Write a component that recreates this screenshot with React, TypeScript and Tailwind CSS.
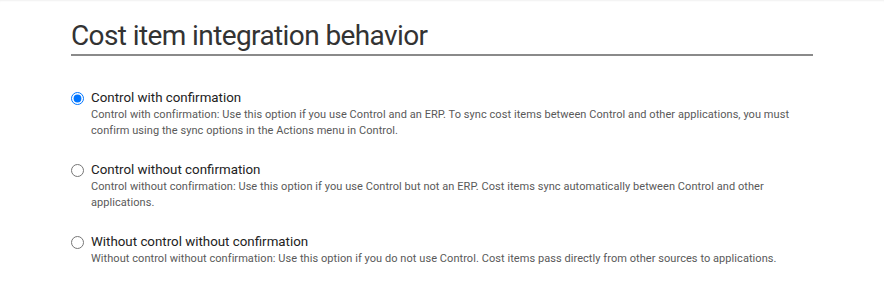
import { useState } from 'react';

const options = [
  {
    id: 'with',
    label: 'Control with confirmation',
    description:
      'Control with confirmation: Use this option if you use Control and an ERP. To sync cost items between Control and other applications, you must confirm using the sync options in the Actions menu in Control.',
  },
  {
    id: 'without',
    label: 'Control without confirmation',
    description:
      'Control without confirmation: Use this option if you use Control but not an ERP. Cost items sync automatically between Control and other applications.',
  },
  {
    id: 'none',
    label: 'Without control without confirmation',
    description:
      'Without control without confirmation: Use this option if you do not use Control. Cost items pass directly from other sources to applications.',
  },
];

export default function App() {
  const [selected, setSelected] = useState('with');

  return (
    <div className="w-[884px] h-[300px] bg-white font-['Roboto',sans-serif] shadow-[inset_0_2px_2px_-1px_rgba(0,0,0,0.06)]">
      <div className="pl-[71px] pr-[71px] pt-[20px]">
        <h2 className="text-[28px] leading-[32px] text-[#333] tracking-[-0.6px] pb-[2px] border-b-2 border-[#8a8a8a]">
          Cost item integration behavior
        </h2>
        <div className="flex flex-col gap-[22px] pt-[33px]">
          {options.map((o) => (
            <label key={o.id} className="flex items-start gap-[7px] cursor-pointer">
              <input
                type="radio"
                name="behavior"
                checked={selected === o.id}
                onChange={() => setSelected(o.id)}
                className="w-[13px] h-[13px] m-0 mt-[3px] accent-[#0075ff] shrink-0"
              />
              <div className="flex flex-col">
                <span className="text-[13.33px] leading-[18px] text-[#222]">{o.label}</span>
                <span className="text-[11px] leading-[16px] tracking-[0.06px] text-[#595959] max-w-[720px]">{o.description}</span>
              </div>
            </label>
          ))}
        </div>
      </div>
    </div>
  );
}
